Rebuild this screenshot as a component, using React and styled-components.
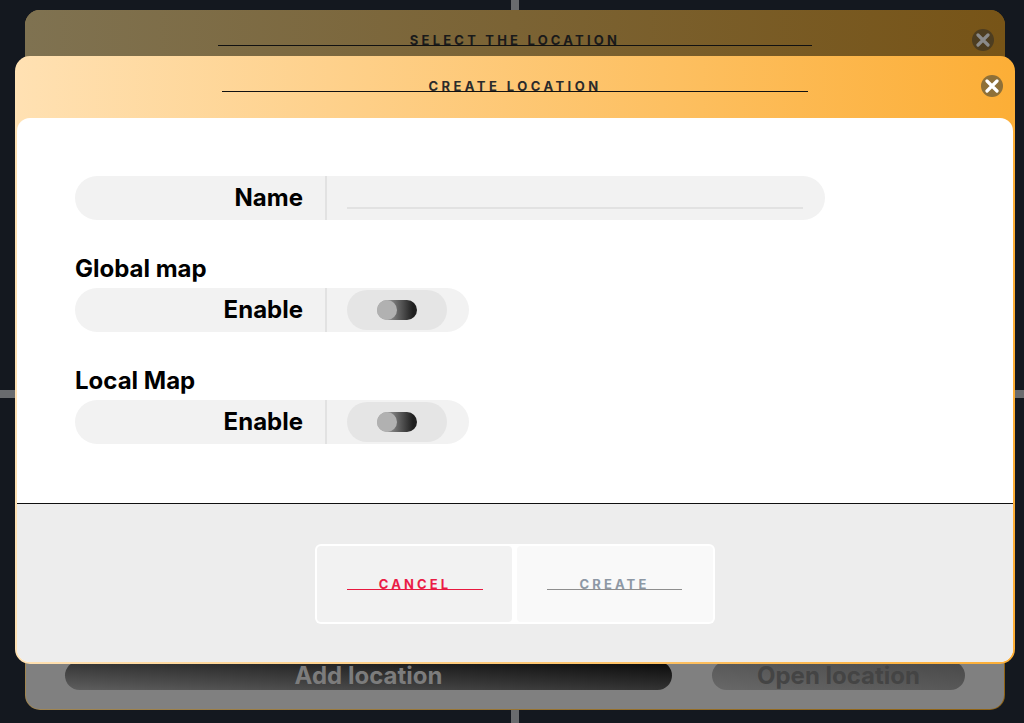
import React from 'react';
import styled, { createGlobalStyle } from 'styled-components';

const GlobalStyle = createGlobalStyle`
  html, body {
    margin: 0;
    padding: 0;
    background: #14181f;
  }
  * {
    box-sizing: border-box;
  }
`;

const Page = styled.div`
  position: relative;
  width: 1024px;
  height: 723px;
  overflow: hidden;
  padding: 10px 19px 13px 25px;
  background:
    linear-gradient(#696b6e, #696b6e) 511px 0 / 8px 100% no-repeat,
    linear-gradient(#696b6e, #696b6e) 0 390px / 100% 8px no-repeat,
    #14181f;
`;

const BackModal = styled.section`
  height: 100%;
  display: flex;
  flex-direction: column;
  justify-content: space-between;
  border: 1px solid transparent;
  border-radius: 15px;
  background:
    linear-gradient(#808080, #808080) padding-box,
    linear-gradient(90deg, #a08550, #8f6212) border-box;
`;

const BackHeader = styled.header`
  position: relative;
  height: 100px;
  margin: -1px -1px 0;
  padding-top: 21px;
  display: flex;
  justify-content: center;
  align-items: flex-start;
  border-radius: 15px 15px 0 0;
  background: linear-gradient(90deg, #7f7251, #775417);
`;

const Title = styled.h2`
  width: ${props => props.$width}px;
  height: 15px;
  margin: 0;
  border-bottom: 1px solid #111;
  font-family: 'Inter', 'Liberation Sans', sans-serif;
  font-size: 13px;
  line-height: 19px;
  font-weight: 700;
  letter-spacing: ${props => props.$spacing}px;
  text-align: center;
  color: ${props => props.$color};
`;

const CloseButton = styled.button`
  position: absolute;
  top: ${props => props.$top}px;
  right: ${props => props.$right}px;
  width: 22px;
  height: 22px;
  padding: 0;
  border: 0;
  border-radius: 50%;
  display: flex;
  align-items: center;
  justify-content: center;
  background: ${props => props.$bg};
  color: ${props => props.$color};
`;

const BackActions = styled.div`
  display: flex;
  gap: 40px;
  padding: 0 39px 19px;
`;

const BackAction = styled.div`
  height: 29px;
  width: ${props => props.$width}px;
  border-radius: 15px;
  display: flex;
  align-items: center;
  justify-content: center;
  font-family: 'Inter', 'Liberation Sans', sans-serif;
  font-size: 24px;
  font-weight: 700;
  color: ${props => props.$color};
  background: ${props => props.$bg};
`;

const FrontModal = styled.section`
  position: absolute;
  top: 56px;
  left: 15px;
  width: 1000px;
  height: 608px;
  padding: 0 2px 2px;
  display: flex;
  flex-direction: column;
  border-radius: 15px;
  background: linear-gradient(90deg, #ffe1b3, #fcae36);
`;

const FrontHeader = styled.header`
  position: relative;
  flex: 0 0 62px;
  padding-top: 21px;
  display: flex;
  justify-content: center;
  align-items: flex-start;
`;

const FrontBody = styled.div`
  flex: 1;
  display: flex;
  flex-direction: column;
  border-radius: 13px;
  overflow: hidden;
  background: #fff;
`;

const Form = styled.div`
  flex: 0 0 386px;
  padding: 58px 58px 0;
  border-bottom: 1px solid #111;
`;

const Row = styled.div`
  width: ${props => props.$width}px;
  height: 44px;
  display: flex;
  border-radius: 22px;
  background: #f2f2f2;
`;

const Label = styled.div`
  flex: 0 0 252px;
  padding: 0 22px 2px 0;
  border-right: 2px solid #e2e2e2;
  display: flex;
  align-items: center;
  justify-content: flex-end;
  font-family: 'Inter', 'Liberation Sans', sans-serif;
  font-size: 24px;
  font-weight: 700;
  color: #000;
`;

const Field = styled.div`
  flex: 1;
  padding: 0 22px 0 20px;
  display: flex;
  align-items: center;
`;

const NameInput = styled.div`
  width: 100%;
  height: 2px;
  margin-top: 19px;
  background: #e2e2e2;
`;

const Group = styled.div`
  margin-top: ${props => props.$top}px;
`;

const GroupTitle = styled.h3`
  margin: 0;
  height: 32px;
  font-family: 'Inter', 'Liberation Sans', sans-serif;
  font-size: 24px;
  line-height: 26px;
  font-weight: 700;
  color: #000;
`;

const TogglePill = styled.div`
  width: 100px;
  height: 40px;
  border-radius: 20px;
  display: flex;
  align-items: center;
  justify-content: center;
  background: #e5e5e5;
`;

const ToggleTrack = styled.div`
  width: 40px;
  height: 20px;
  border-radius: 10px;
  background: linear-gradient(90deg, #a0a0a0 20%, #1f1f1f 90%);
`;

const ToggleKnob = styled.div`
  width: 20px;
  height: 20px;
  border-radius: 50%;
  background: #b1b1b1;
`;

const Footer = styled.footer`
  flex: 1;
  display: flex;
  align-items: flex-start;
  justify-content: center;
  padding-top: 40px;
  background: #ededed;
`;

const ButtonGroup = styled.div`
  width: 400px;
  height: 80px;
  padding: 2px;
  display: flex;
  gap: 5px;
  border-radius: 6px;
  background: #fff;
`;

const Button = styled.button`
  flex: 0 0 ${props => props.$width}px;
  padding: 0 0 2px 30px;
  border: 0;
  border-radius: 4px;
  display: flex;
  align-items: center;
  background: ${props => props.$bg};
`;

const ButtonText = styled.span`
  display: block;
  width: ${props => props.$width}px;
  height: 14px;
  border-bottom: 1px solid ${props => props.$line};
  font-family: 'Inter', 'Liberation Sans', sans-serif;
  font-size: 13px;
  line-height: 17px;
  font-weight: 700;
  letter-spacing: 3.1px;
  text-align: center;
  color: ${props => props.$color};
`;

const CloseIcon = () => (
  <svg width="14" height="14" viewBox="0 0 14 14" fill="none">
    <path d="M2 2l10 10M12 2L2 12" stroke="currentColor" strokeWidth="3.2" strokeLinecap="round" />
  </svg>
);

const ToggleRow = ({ title, top }) => (
  <Group $top={top}>
    <GroupTitle>{title}</GroupTitle>
    <Row $width={394}>
      <Label>Enable</Label>
      <Field>
        <TogglePill>
          <ToggleTrack>
            <ToggleKnob />
          </ToggleTrack>
        </TogglePill>
      </Field>
    </Row>
  </Group>
);

export default function App() {
  return (
    <>
      <GlobalStyle />
      <Page>
        <BackModal>
          <BackHeader>
            <Title $width={594} $spacing={3.2} $color="#1a1a1a">SELECT THE LOCATION</Title>
            <CloseButton $top={19} $right={11} $bg="#4d3d20" $color="#8a8a8a">
              <CloseIcon />
            </CloseButton>
          </BackHeader>
          <BackActions>
            <BackAction $width={607} $color="#7c7c7c" $bg="linear-gradient(to top right, #5e5e5e, #080808)">
              Add location
            </BackAction>
            <BackAction $width={253} $color="#444" $bg="linear-gradient(to top right, #686868, #484848)">
              Open location
            </BackAction>
          </BackActions>
        </BackModal>
        <FrontModal>
          <FrontHeader>
            <Title $width={586} $spacing={3.45} $color="#2b2b2b">CREATE LOCATION</Title>
            <CloseButton $top={19} $right={10} $bg="#8e7038" $color="#fff">
              <CloseIcon />
            </CloseButton>
          </FrontHeader>
          <FrontBody>
            <Form>
              <Row $width={750}>
                <Label>Name</Label>
                <Field>
                  <NameInput />
                </Field>
              </Row>
              <ToggleRow title="Global map" top={36} />
              <ToggleRow title="Local Map" top={36} />
            </Form>
            <Footer>
              <ButtonGroup>
                <Button $width={195} $bg="#f2f2f2">
                  <ButtonText $width={136} $line="#e8193f" $color="#ea1c46">CANCEL</ButtonText>
                </Button>
                <Button $width={196} $bg="#f9f9f9">
                  <ButtonText $width={135} $line="#8e8e8e" $color="#8d98a5">CREATE</ButtonText>
                </Button>
              </ButtonGroup>
            </Footer>
          </FrontBody>
        </FrontModal>
      </Page>
    </>
  );
}
